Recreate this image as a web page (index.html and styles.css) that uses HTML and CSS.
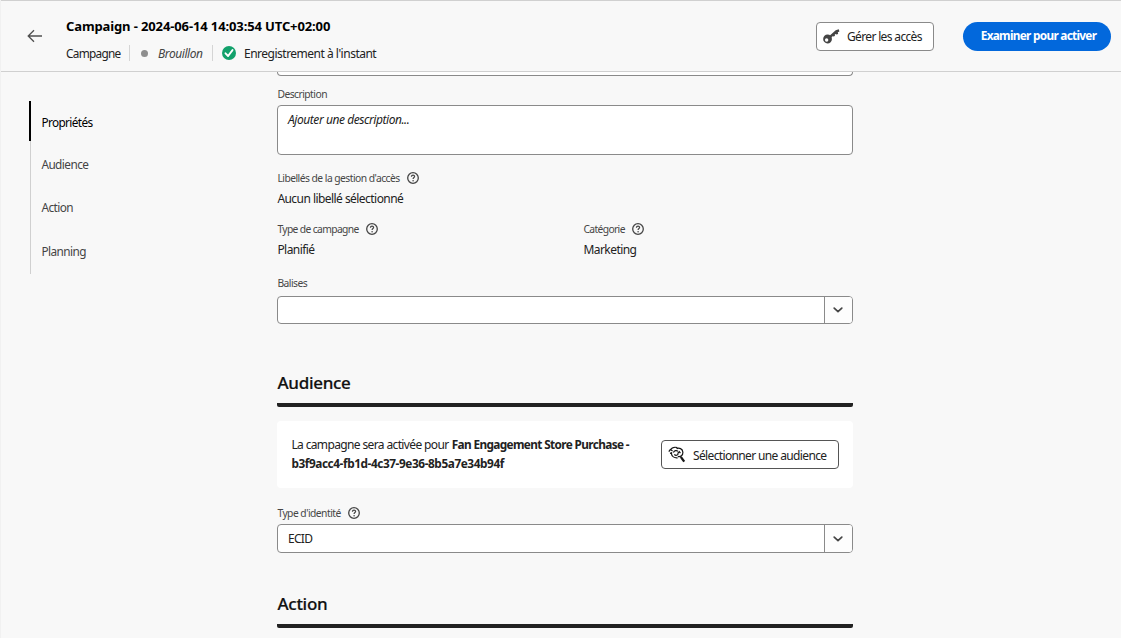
FILE: index.html
```html
<!DOCTYPE html>
<html lang="fr">
<head>
<meta charset="utf-8">
<title>Campaign</title>
<link rel="stylesheet" href="styles.css">
</head>
<body>
<svg class="defs" width="0" height="0">
  <symbol id="help" viewBox="0 0 12 12"><circle cx="6" cy="6" r="5.3" fill="none" stroke="#464646" stroke-width="1.3"/><path d="M4.4 4.7C4.5 2.6 7.6 2.7 7.6 4.5C7.6 5.6 6.1 5.6 6.1 7" fill="none" stroke="#464646" stroke-width="1.25"/><circle cx="6.1" cy="8.7" r=".8" fill="#464646"/></symbol>
  <symbol id="chevron" viewBox="0 0 10 6"><path d="M1.2 1.1L5 4.7L8.8 1.1" fill="none" stroke="#464646" stroke-width="1.7" stroke-linecap="round" stroke-linejoin="round"/></symbol>
</svg>
<header class="topbar">
  <svg class="back" width="16" height="14" viewBox="0 0 16 14"><path d="M15 7H1.2M7 1.2L1.2 7L7 12.8" fill="none" stroke="#505050" stroke-width="1.3"/></svg>
  <div class="heading">
    <h1 class="title"><span class="t-title">Campaign - 2024-06-14 14:03:54 UTC+02:00</span></h1>
    <div class="meta">
      <span class="kind">Campagne</span>
      <span class="status"><i class="dot"></i><em class="draft">Brouillon</em></span>
      <span class="saved"><svg width="14" height="14" viewBox="0 0 14 14"><circle cx="7" cy="7" r="7" fill="#12a16b"/><path d="M3.5 7.3L6.1 10L10.5 4.1" fill="none" stroke="#fff" stroke-width="1.9" stroke-linecap="round" stroke-linejoin="round"/></svg><span class="t-saved">Enregistrement à l'instant</span></span>
    </div>
  </div>
  <button class="btn access"><svg width="17" height="15" viewBox="0 0 17 15"><g fill="#444"><path fill-rule="evenodd" d="M4.6 5.6A4.4 4.4 0 1 1 4.5 14.4A4.4 4.4 0 0 1 4.6 5.6ZM3.6 9.3A1.7 1.7 0 1 0 3.7 12.7A1.7 1.7 0 0 0 3.6 9.3Z"/><path d="M6 7.2L12.7 1.2L15.8.3L16.4 2.4L14.8 3.3L15.2 4.9L13.3 5.4L12.5 4.9L11.8 5.5L11.9 7.1L10.2 7.5L9.5 7.2L7.9 8.9Z"/></g></svg><span class="t-access">Gérer les accès</span></button>
  <button class="primary"><span class="t-primary">Examiner pour activer</span></button>
</header>
<div class="page">
  <nav class="steps">
    <a class="step active"><span>Propriétés</span></a>
    <a class="step"><span>Audience</span></a>
    <a class="step"><span>Action</span></a>
    <a class="step last"><span>Planning</span></a>
  </nav>
  <main class="form">
    <div class="clipped"></div>
    <div class="label l-desc"><span>Description</span></div>
    <div class="textarea"><em>Ajouter une description...</em></div>
    <div class="label l-access"><span>Libellés de la gestion d'accès</span><svg class="help"><use href="#help"/></svg></div>
    <div class="value"><span>Aucun libellé sélectionné</span></div>
    <div class="columns">
      <div><div class="label l-type"><span>Type de campagne</span><svg class="help"><use href="#help"/></svg></div><div class="value"><span>Planifié</span></div></div>
      <div><div class="label l-type"><span>Catégorie</span><svg class="help"><use href="#help"/></svg></div><div class="value"><span>Marketing</span></div></div>
    </div>
    <div class="label l-tags"><span>Balises</span></div>
    <div class="combo tags"><div class="input"></div><div class="toggle"><svg><use href="#chevron"/></svg></div></div>
    <h2 class="section aud"><span>Audience</span></h2>
    <div class="card">
      <p><span class="c-lead">La campagne sera activée pour</span> <b class="c-name">Fan Engagement Store Purchase -</b><br><b class="c-id">b3f9acc4-fb1d-4c37-9e36-8b5a7e34b94f</b></p>
      <button class="btn pick"><svg width="18" height="17" viewBox="0 0 18 17"><g fill="none" stroke="#161616" stroke-width="1.2"><path d="M.8 5.6L2.3 3.6L4.6 4.9M2.4 4.2C3.6 1.8 6.4.8 9.4 1.6"/><path d="M2 7.4L4.2 6.6M3.2 7.2C3.7 10.4 6.4 12.2 9.6 11.8"/><path d="M5.4 6.4C6.2 4.6 8.6 3.9 10 5.4M6.4 8.4C7.2 9.6 9 9.6 10 8.4"/><path d="M8.6 2.8C11 1.3 14.6 2.8 14.9 6.2C15 9.2 12.6 11.2 9.8 10.4"/><path d="M10 8.4V7L11.3 5.7L12.4 7.2"/><path d="M12.8 10.9L16.2 15.6" stroke-width="2.3"/></g></svg><span class="t-pick">Sélectionner une audience</span></button>
    </div>
    <div class="label l-id"><span>Type d'identité</span><svg class="help"><use href="#help"/></svg></div>
    <div class="combo ident"><div class="input"><span>ECID</span></div><div class="toggle"><svg><use href="#chevron"/></svg></div></div>
    <h2 class="section act"><span>Action</span></h2>
  </main>
</div>
</body>
</html>
```
FILE: styles.css
```css
* { box-sizing: border-box; }
html, body { margin: 0; height: 638px; overflow: hidden; }
body { background: #f8f8f8; font-family: "Noto Sans", sans-serif; font-size: 12px; color: #222; border-left: 1px solid #f1f1f1; }
.defs { display: block; }
h1, h2, p { margin: 0; }
button { font: inherit; color: inherit; padding: 0; }
span, em, b { white-space: nowrap; }
.topbar { height: 72px; border-top: 1px solid #d0d0d0; border-bottom: 1px solid #d0d0d0; display: flex; padding: 0 10px 0 26px; }
.back { margin-top: 28px; flex: none; }
.heading { margin-left: 23px; flex: 1; padding-top: 15px; }
.title { font-size: 13px; line-height: 20px; height: 20px; color: #000; font-weight: 700; }
.t-title { letter-spacing: -.12px; }
.meta { display: flex; align-items: center; height: 16px; margin-top: 9px; line-height: 18px; }
.kind { width: 64px; height: 16px; line-height: 16px; border-right: 1px solid #d5d5d5; font-size: 11.8px; letter-spacing: -.72px; }
.status { width: 83px; display: flex; align-items: center; border-right: 1px solid #d5d5d5; height: 16px; padding-left: 11px; }
.dot { width: 7px; height: 7px; border-radius: 50%; background: #8e8e8e; margin-right: 10px; }
.draft { letter-spacing: -.42px; color: #444; padding-top: 1px; }
.saved { display: flex; align-items: center; padding-left: 9px; }
.saved svg { margin-right: 8px; }
.t-saved { letter-spacing: -.5px; padding-top: 1px; }
.btn { display: flex; align-items: center; background: #fff; border: 1px solid #8a8a8a; border-radius: 4px; flex: none; }
.access { width: 118px; height: 29px; margin-top: 21px; padding-left: 6px; }
.access svg { margin-right: 7px; }
.t-access { letter-spacing: -.65px; }
.primary { width: 148px; height: 29px; margin: 21px 0 0 29px; border: 0; border-radius: 15px; background: #0268dc; color: #fff; font-weight: 700; padding: 0 0 2px 3px; }
.t-primary { font-size: 11.8px; letter-spacing: -.7px; }
.page { display: flex; height: 566px; }
.steps { margin: 29px 0 0 28px; width: 248px; height: 173px; display: flex; flex-direction: column; }
.step { border-left: 1px solid #d0d0d0; margin-left: 1px; padding-left: 10.4px; height: 43px; line-height: 47px; font-size: 11.8px; letter-spacing: -.55px; color: #444; }
.step.active { border-left: 2px solid #000; margin-left: 0; height: 40px; line-height: 43px; color: #000; letter-spacing: -.62px; }
.step.last { height: 47px; line-height: 49px; }
.form { width: 576px; }
.clipped { height: 4px; border: 1px solid #8a8a8a; border-top: 0; border-radius: 0 0 4px 4px; background: #fff; }
.label { display: flex; align-items: center; height: 16px; font-size: 10.3px; color: #464646; letter-spacing: -.53px; padding-left: .4px; }
.help { width: 12px; height: 12px; margin-left: 7px; flex: none; }
.l-type { letter-spacing: -.63px; }
.l-desc { margin: 10px 0 3px; }
.textarea { height: 50px; border: 1px solid #8a8a8a; border-radius: 4px; background: #fff; padding: 5px 10px; line-height: 17px; letter-spacing: -.44px; }
.l-access { margin-top: 15px; }
.value { height: 20px; line-height: 21px; margin-top: 2px; letter-spacing: -.55px; padding-left: .4px; }
.columns { display: grid; grid-template-columns: 306px 1fr; margin-top: 13px; }
.columns .value { margin-top: 3px; line-height: 20px; }
.l-tags { margin: 15px 0 5px; }
.combo { display: flex; border: 1px solid #8a8a8a; border-radius: 4px; background: #fff; height: 28px; }
.input { flex: 1; padding-left: 10px; line-height: 27px; letter-spacing: -.7px; }
.toggle { width: 28px; border-left: 1px solid #8a8a8a; display: flex; align-items: center; padding-left: 8px; background: #fdfdfd; border-radius: 0 3px 3px 0; }
.toggle svg { width: 10px; height: 6px; }
.section { font-size: 17px; font-weight: 500; color: #111; border-bottom: 4px solid #222; border-radius: 2px; height: 36px; line-height: 24px; letter-spacing: -.3px; padding-left: .5px; -webkit-text-stroke: .2px #111; }
.aud { margin-top: 47px; }
.card { margin-top: 14px; height: 67px; border-radius: 4px; background: #fff; display: flex; justify-content: space-between; padding: 14px 14px 0 14.4px; line-height: 19px; }
.c-lead { letter-spacing: -.63px; }
.c-name { font-size: 11.8px; letter-spacing: -.63px; }
.c-id { font-size: 11.8px; letter-spacing: -.41px; }
.pick { width: 178px; height: 29px; margin-top: 5px; padding-left: 6px; border-color: #555; }
.pick svg { margin-right: 7px; }
.t-pick { letter-spacing: -.64px; padding-top: 1px; }
.l-id { margin: 17px 0 3px; }
.ident { height: 29px; }
.act { margin-top: 39px; }
```
